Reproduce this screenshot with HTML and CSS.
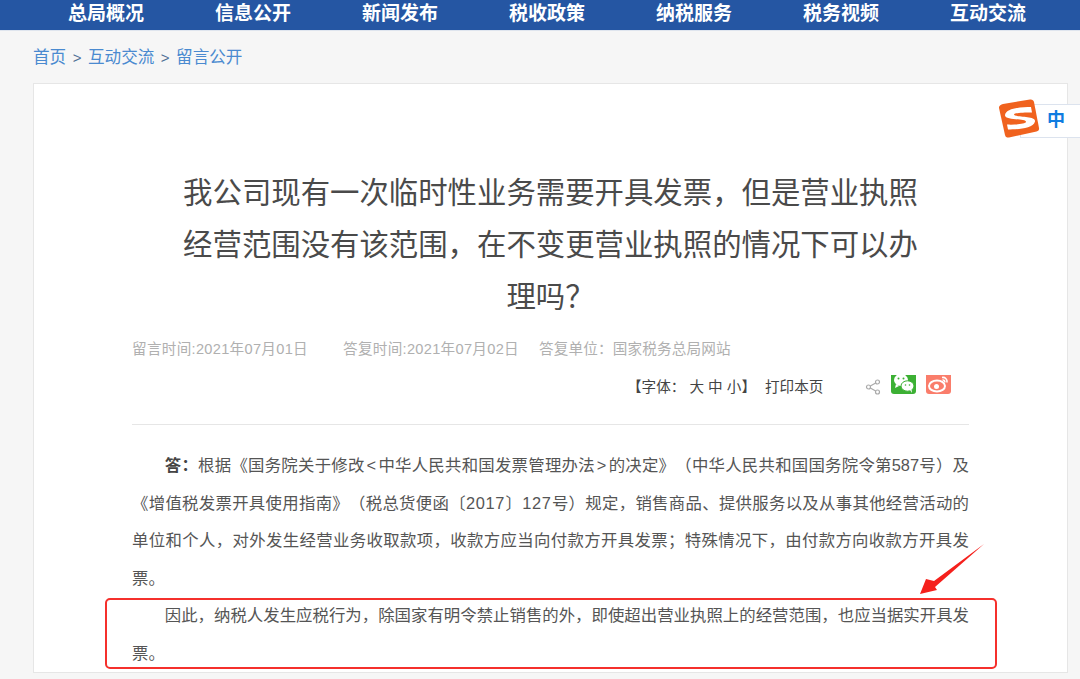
FILE: index.html
```html
<!DOCTYPE html>
<html lang="zh-CN">
<head>
  <meta charset="UTF-8">
  <title>留言公开</title>
  <link rel="stylesheet" href="styles.css">
</head>
<body>

  <div class="nav">
    <a>总局概况</a>
    <a>信息公开</a>
    <a>新闻发布</a>
    <a>税收政策</a>
    <a>纳税服务</a>
    <a>税务视频</a>
    <a>互动交流</a>
  </div>

  <div class="crumb">
    <a>首页</a><span>&gt;</span><a>互动交流</a><span>&gt;</span><a>留言公开</a>
  </div>

  <div class="card">
    <h1>我公司现有一次临时性业务需要开具发票，但是营业执照经营范围没有该范围，在不变更营业执照的情况下可以办理吗？</h1>

    <div class="meta">
      <span class="meta-ask">留言时间:2021年07月01日</span>
      <span class="meta-reply">答复时间:2021年07月02日</span>
      <span class="meta-unit">答复单位：国家税务总局网站</span>
    </div>

    <div class="tools">
      <span class="font-size">【字体： <i>大</i> <i>中</i> <i>小</i>】</span>
      <span class="print">打印本页</span>
      <svg class="share" width="16" height="16" viewBox="0 0 16 16" fill="none" stroke="#aaa" stroke-width="1.2">
        <circle cx="12.5" cy="3" r="2"/>
        <circle cx="3.5" cy="8" r="2"/>
        <circle cx="12.5" cy="13" r="2"/>
        <path d="M5.3 7 10.7 4M5.3 9 10.7 12"/>
      </svg>
      <span class="social wechat">
        <svg width="25" height="19" viewBox="0 0 25 19" fill="#fff">
          <ellipse cx="10" cy="5" rx="7" ry="6"/>
          <path d="M5 9 4 13l4-2z"/>
          <ellipse cx="16.500" cy="11" rx="6.500" ry="5.200" stroke="#3cb034" stroke-width="1"/>
          <path d="M19 15l2 3-.5-4z"/>
          <circle cx="7.500" cy="3.500" r="1" fill="#3cb034"/>
          <circle cx="12.500" cy="3.500" r="1" fill="#3cb034"/>
          <circle cx="14.500" cy="10" r=".8" fill="#3cb034"/>
          <circle cx="18.500" cy="10" r=".8" fill="#3cb034"/>
        </svg>
      </span>
      <span class="social weibo">
        <svg width="25" height="19" viewBox="0 0 25 19" fill="none" stroke="#fff">
          <ellipse cx="11" cy="11" rx="8" ry="5.500" stroke-width="2"/>
          <circle cx="10.500" cy="11.500" r="2.500" fill="#fff" stroke="none"/>
          <path d="M16 2.500c3-.5 5.500 1.500 5 5M16.500 5c1.500-.2 2.500.8 2.300 2.300" stroke-width="1.600"/>
        </svg>
      </span>
    </div>

    <div class="answer">
      <p><b>答：</b>根据《国务院关于修改<span class="angle">&lt;</span>中华人民共和国发票管理办法<span class="angle">&gt;</span>的决定》（中华人民共和国国务院令第587号）及《增值税发票开具使用指南》（税总货便函〔<span class="num">2017</span>〕<span class="num">127</span>号）规定，销售商品、提供服务以及从事其他经营活动的单位和个人，对外发生经营业务收取款项，收款方应当向付款方开具发票；特殊情况下，由付款方向收款方开具发票。</p>
      <p>因此，纳税人发生应税行为，除国家有明令禁止销售的外，即使超出营业执照上的经营范围，也应当据实开具发票。</p>
    </div>
  </div>

  <!-- red marks drawn over the shot -->
  <div class="red-box"></div>
  <svg class="red-arrow" width="70" height="60" viewBox="0 0 70 60">
    <path d="M64 1 14 38 6 36 0 51 17 47 15 44z" fill="#f5201c"/>
  </svg>

  <!-- input method badge -->
  <div class="ime">
    <span class="ime-zh">中</span>
  </div>
  <svg class="ime-logo" width="42" height="42" viewBox="0 0 42 42">
    <path d="M5 5 32 .5c2-.3 3.500.5 4 2.500l5 26c.3 2-.5 3-2.500 3.500L11 38.500c-2 .3-3.500-.5-4-2.500L1 9C.6 7 3 5.500 5 5z" fill="#f0621e"/>
    <path d="M33 8C24 8 8 9 7 16c-1 6 22 3 21 7-.5 2-12 3-19 2.500l1 5c8 0 25-.5 27-8 1.500-6-21-4-21-7 0-1.500 9-2 18-2z" fill="#fff"/>
  </svg>

</body>
</html>
```

FILE: styles.css
```css
html, body {
  height: 679px;
  overflow: hidden;
}

body {
  margin: 0;
  background-color: #f6f6f6;
  font-family: "Liberation Sans", "Noto Sans CJK SC", sans-serif;
  color: #555;
  position: relative;
  text-spacing-trim: space-all;
}

.nav {
  height: 30px;
  background-color: #2556a3;
  border-bottom: 1px solid #dfe5ee;
  display: flex;
  justify-content: center;
  padding-left: 14px;
  margin-bottom: 13px;
}

.nav a {
  width: 147px;
  text-align: center;
  color: #fff;
  font-size: 19px;
  font-weight: bold;
  line-height: 28px;
}

.crumb {
  height: 26px;
  margin-left: 33px;
  font-size: 16.600px;
  line-height: 28px;
  color: #4a8ad0;
}

.crumb span {
  margin: 0 6.500px;
  font-size: 15px;
  color: #4f6f95;
}

.card {
  margin: 13px 12px 0 33px;
  height: 590px;
  box-sizing: border-box;
  background-color: #fff;
  border: 1px solid #e6e6e6;
  padding: 83px 98px 0;
}

h1 {
  margin: 0 auto;
  width: 742px;
  text-align: center;
  font-size: 29.400px;
  font-weight: normal;
  line-height: 52px;
  color: #4a4a4a;
}

.meta {
  margin-top: 15px;
  font-size: 14.600px;
  line-height: 22px;
  color: #b0b0b0;
  display: flex;
}

.meta-ask {
  width: 211px;
  letter-spacing: .3px;
}

.meta-reply {
  width: 196px;
  letter-spacing: .3px;
}

.meta-unit {
  letter-spacing: .15px;
}

.tools {
  margin-top: 15px;
  height: 37px;
  padding-left: 495px;
  padding-bottom: 12px;
  display: flex;
  align-items: flex-start;
  font-size: 14.600px;
  line-height: 24px;
  color: #444;
  border-bottom: 1px solid #e6e6e6;
}

.font-size i {
  font-style: normal;
}

.print {
  margin-left: 9px;
}

.share {
  margin: 4px 0 0 42px;
}

.social {
  width: 25px;
  height: 19px;
  border-radius: 0 0 3px 3px;
  margin-left: 10px;
  overflow: hidden;
}

.wechat {
  background-color: #3cb034;
}

.weibo {
  background-color: #fa7d6b;
}

.social svg {
  display: block;
}

.answer {
  margin-top: 22px;
  font-size: 16.400px;
  line-height: 37.500px;
  color: #555;
  text-align: justify;
}

.answer p {
  margin: 0;
  text-indent: 2em;
}

.answer b {
  color: #444;
}

.angle {
  padding: 0 2px;
}

.num {
  letter-spacing: .7px;
}

.red-box {
  position: absolute;
  left: 105px;
  top: 598px;
  width: 888px;
  height: 67px;
  border: 2px solid #f5302c;
  border-radius: 5px;
}

.red-arrow {
  position: absolute;
  left: 920px;
  top: 543px;
}

.ime {
  position: absolute;
  left: 1020px;
  top: 104px;
  width: 60px;
  height: 34px;
  background-color: #fff;
  border: 1px solid #dce3ee;
  border-right: 0;
  box-sizing: border-box;
}

.ime-zh {
  display: block;
  padding-left: 26px;
  font-size: 18px;
  font-weight: bold;
  line-height: 31px;
  color: #0f7ce0;
}

.ime-logo {
  position: absolute;
  left: 998px;
  top: 99px;
}
```
